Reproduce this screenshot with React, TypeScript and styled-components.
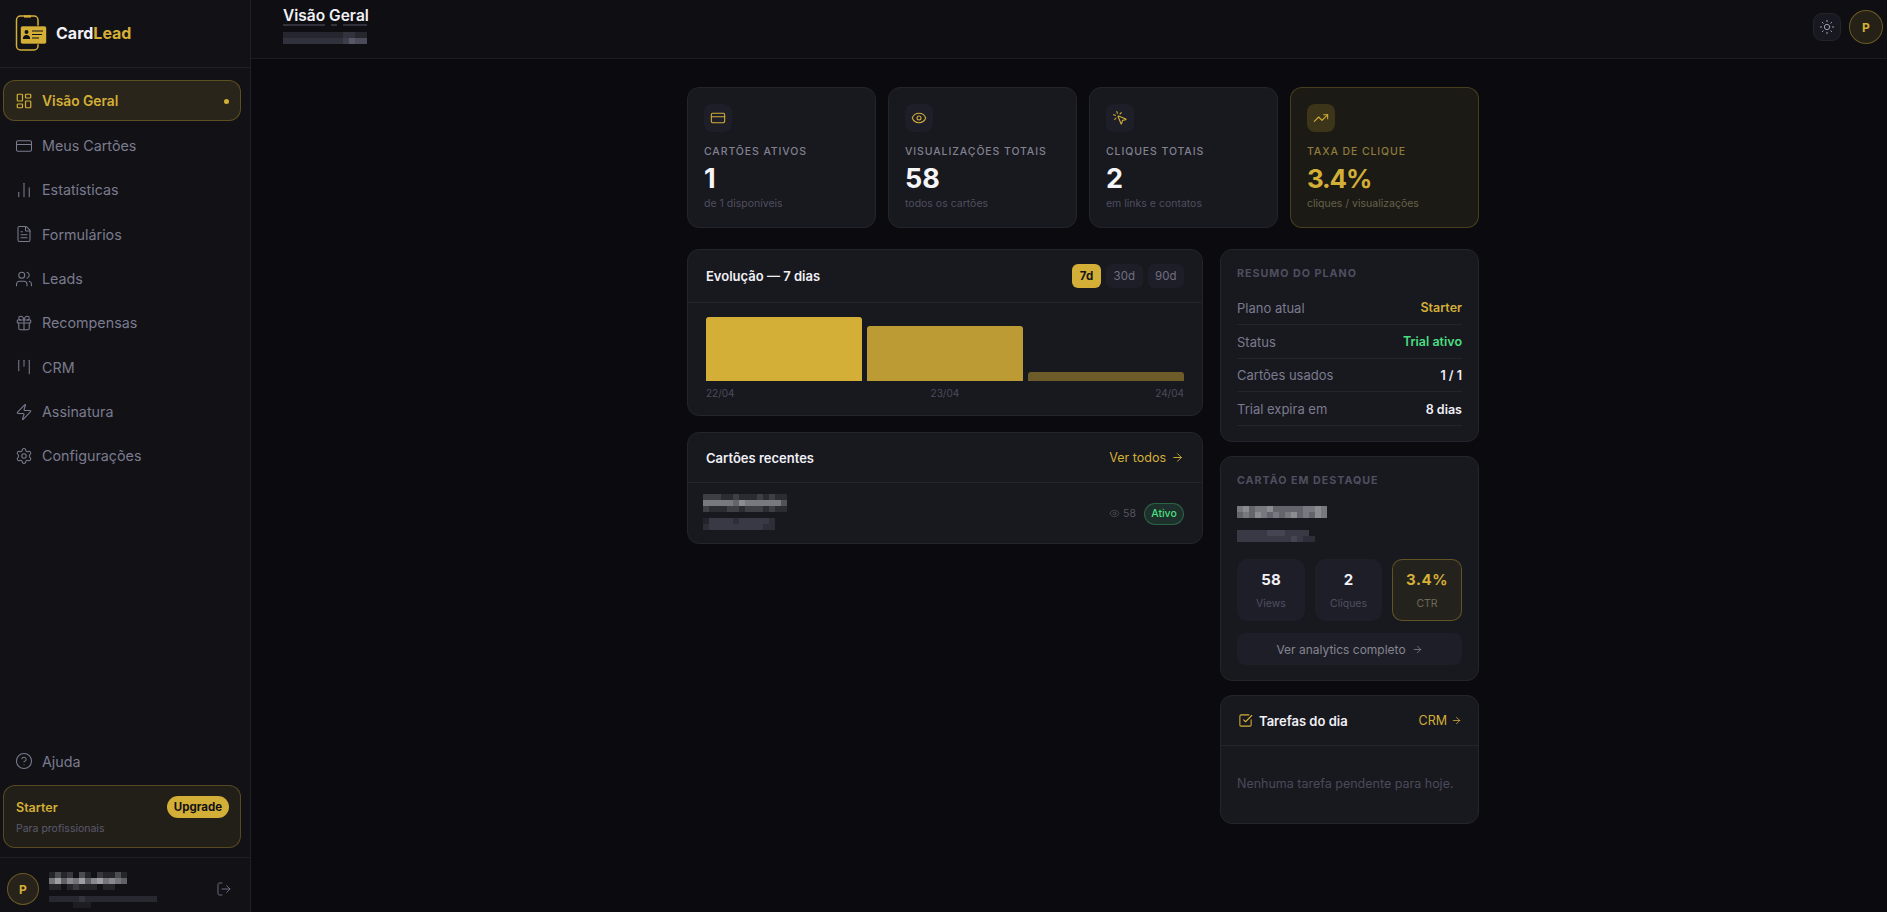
import React from 'react'
import styled, { createGlobalStyle } from 'styled-components'
import {
  ArrowRight,
  ChartNoAxesColumn,
  CircleHelp,
  CreditCard,
  Eye,
  FileText,
  Gift,
  Kanban,
  LayoutDashboard,
  LogOut,
  MousePointerClick,
  Settings,
  SquareCheckBig,
  Sun,
  TrendingUp,
  Users,
  Zap,
} from 'lucide-react'

const GOLD = '#d4af37'

const GlobalStyle = createGlobalStyle`
  * { box-sizing: border-box; }
  html, body { margin: 0; padding: 0; height: 100%; background: #0a0a0f; }
  body { font-family: Inter, "Liberation Sans", sans-serif; color: #f0f0f5; overflow: hidden; }
`

const Shell = styled.div`
  display: flex;
  width: 1887px;
  height: 912px;
  overflow: hidden;
`

const Sidebar = styled.aside`
  display: flex;
  flex-direction: column;
  flex: 0 0 251px;
  height: 912px;
  background: #111116;
  border-right: 1px solid #1f1f26;
`

const Brand = styled.div`
  display: flex;
  align-items: center;
  gap: 7px;
  height: 68px;
  padding: 0 0 0 14px;
  border-bottom: 1px solid #1f1f26;
`

const BrandName = styled.span`
  margin-top: -2px;
  font-size: 16px;
  font-weight: 700;
  color: #f0f0f5;
  span { color: ${GOLD}; }
`

const Nav = styled.nav`
  display: flex;
  flex-direction: column;
  flex: 1;
  gap: 3px;
  padding: 12px 9px 3.5px 3px;
`

const NavItem = styled.a<{ $active?: boolean }>`
  display: flex;
  align-items: center;
  flex: none;
  gap: 9px;
  height: 41.35px;
  padding: 1px 14px 0 11px;
  border: 1px solid ${(p) => (p.$active ? 'rgba(212,175,55,0.3)' : 'transparent')};
  border-radius: 12px;
  background: ${(p) => (p.$active ? 'rgba(212,175,55,0.13)' : 'transparent')};
  color: ${(p) => (p.$active ? GOLD : '#7b7b8e')};
  font-size: ${(p) => (p.$active ? 13.8 : 14.3)}px;
  font-weight: ${(p) => (p.$active ? 600 : 400)};
  svg { flex: none; }
`

const NavSpacer = styled.div`
  flex: 1;
`

const ActiveDot = styled.span`
  width: 5px;
  height: 5px;
  margin-left: auto;
  margin-right: -3px;
  border-radius: 50%;
  background: ${GOLD};
`

const PlanBox = styled.div`
  display: grid;
  grid-template-columns: 1fr auto;
  align-items: center;
  align-content: start;
  height: 63px;
  margin: 0 9px 9px 3px;
  padding: 10px 11px 0 12px;
  border: 1px solid rgba(212,175,55,0.3);
  border-radius: 12px;
  background: rgba(212,175,55,0.09);
`

const PlanName = styled.span`
  font-size: 12.5px;
  font-weight: 600;
  color: ${GOLD};
`

const UpgradeButton = styled.span`
  display: flex;
  align-items: center;
  height: 22px;
  padding: 0 7px;
  border-radius: 11px;
  background: ${GOLD};
  color: #111116;
  font-size: 11.5px;
  font-weight: 700;
`

const PlanHint = styled.span`
  grid-column: 1 / -1;
  margin-top: 4px;
  font-size: 10.5px;
  color: #5a5a6c;
`

const UserRow = styled.div`
  display: flex;
  align-items: center;
  gap: 10px;
  padding: 15px 18px 7px 7px;
  border-top: 1px solid #1f1f26;
  color: #6b6b7d;
`

const Avatar = styled.div<{ $size: number }>`
  display: flex;
  flex: none;
  align-items: center;
  justify-content: center;
  width: ${(p) => p.$size}px;
  height: ${(p) => p.$size}px;
  border: 1px solid rgba(212,175,55,0.4);
  border-radius: 50%;
  background: rgba(212,175,55,0.12);
  color: ${GOLD};
  font-size: 12px;
  font-weight: 700;
`

const UserText = styled.div`
  display: flex;
  flex: 1;
  flex-direction: column;
  gap: 6px;
  margin: -1px 0 -3px;
  svg { display: block; }
`

const Content = styled.div`
  display: flex;
  flex: 1;
  flex-direction: column;
  min-width: 0;
`

const TopBar = styled.header`
  display: flex;
  justify-content: space-between;
  height: 59px;
  padding: 7px 4px 0 32px;
  background: #0e0e13;
  border-bottom: 1px solid #1c1c23;
`

const PageTitle = styled.h1`
  margin: 0;
  font-size: 15.5px;
  line-height: 17px;
  font-weight: 600;
  color: #f0f0f5;
  white-space: nowrap;
`

const TitleBlock = styled.div`
  display: flex;
  flex-direction: column;
  width: 84px;
  gap: 6px;
  svg { display: block; }
`

const TopActions = styled.div`
  display: flex;
  align-items: flex-start;
  gap: 8px;
  padding-top: 3px;
`

const ThemeButton = styled.div`
  display: flex;
  align-items: center;
  justify-content: center;
  width: 28px;
  height: 28px;
  margin-top: 3px;
  border: 1px solid #24242d;
  border-radius: 9px;
  background: #181820;
  color: #9a9aae;
`

const Main = styled.main`
  display: flex;
  flex: 1;
  justify-content: center;
  padding: 28px 0 0 28px;
  background: #0a0a0f;
`

const Column = styled.div`
  display: flex;
  flex-direction: column;
  width: 792px;
`

const StatGrid = styled.section`
  display: grid;
  grid-template-columns: repeat(4, 1fr);
  gap: 12px;
`

const StatCard = styled.div<{ $gold?: boolean }>`
  height: 141px;
  padding: 16px;
  border: 1px solid ${(p) => (p.$gold ? 'rgba(212,175,55,0.25)' : '#24242c')};
  border-radius: 12px;
  background: ${(p) => (p.$gold ? '#1c1a14' : '#18181f')};
`

const StatIcon = styled.div<{ $gold?: boolean }>`
  display: flex;
  align-items: center;
  justify-content: center;
  width: 28px;
  height: 28px;
  margin-bottom: 13px;
  border-radius: 8px;
  background: ${(p) => (p.$gold ? 'rgba(212,175,55,0.18)' : '#1e1e29')};
  color: ${GOLD};
`

const StatLabel = styled.div<{ $gold?: boolean }>`
  font-size: 10.5px;
  line-height: 14px;
  font-weight: 500;
  letter-spacing: 0.9px;
  color: ${(p) => (p.$gold ? '#8f7c3f' : '#82828f')};
  white-space: nowrap;
`

const StatValue = styled.div<{ $gold?: boolean }>`
  margin-top: 4px;
  font-size: ${(p) => (p.$gold ? 26 : 27)}px;
  line-height: 32px;
  font-weight: 700;
  letter-spacing: ${(p) => (p.$gold ? -1.2 : 0)}px;
  color: ${(p) => (p.$gold ? GOLD : '#f5f5f8')};
`

const StatHint = styled.div<{ $gold?: boolean }>`
  margin-top: 2px;
  font-size: 10.5px;
  line-height: 14px;
  color: ${(p) => (p.$gold ? '#66614c' : '#4f4f5e')};
  white-space: nowrap;
`

const Columns = styled.div`
  display: grid;
  grid-template-columns: 516px 259px;
  justify-content: space-between;
  align-items: start;
  margin-top: 21px;
`

const Stack = styled.div<{ $gap: number }>`
  display: flex;
  flex-direction: column;
  gap: ${(p) => p.$gap}px;
`

const Card = styled.div`
  border: 1px solid #24242c;
  border-radius: 12px;
  background: #18181f;
`

const CardHead = styled.div<{ $height: number; $left?: number; $right?: number }>`
  display: flex;
  align-items: center;
  justify-content: space-between;
  height: ${(p) => p.$height}px;
  padding: 0 ${(p) => p.$right ?? 18}px 0 ${(p) => p.$left ?? 18}px;
  border-bottom: 1px solid #24242c;
`

const CardTitle = styled.h2`
  display: flex;
  align-items: center;
  gap: 6px;
  margin: 0;
  font-size: 13px;
  font-weight: 600;
  color: #f0f0f5;
  svg { color: ${GOLD}; }
`

const RangeTabs = styled.div`
  display: flex;
  gap: 5px;
`

const RangeTab = styled.span<{ $active?: boolean }>`
  display: flex;
  align-items: center;
  justify-content: center;
  width: ${(p) => (p.$active ? 29 : 36.5)}px;
  height: 24px;
  border-radius: 6px;
  background: ${(p) => (p.$active ? GOLD : '#1e1e28')};
  color: ${(p) => (p.$active ? '#16161a' : '#6f6f80')};
  font-size: 11.5px;
  font-weight: ${(p) => (p.$active ? 700 : 400)};
`

const ChartBody = styled.div`
  padding: 14px 18px 16px;
`

const Bars = styled.div`
  display: flex;
  align-items: flex-end;
  gap: 5px;
  height: 64px;
`

const Bar = styled.div<{ $height: number; $alpha: number }>`
  flex: 1;
  height: ${(p) => p.$height}px;
  border-radius: 3px 3px 0 0;
  background: ${GOLD};
  opacity: ${(p) => p.$alpha};
`

const BarLabels = styled.div`
  display: flex;
  justify-content: space-between;
  margin-top: 6px;
  font-size: 10px;
  line-height: 12px;
  color: #4c4c5a;
`

const GoldLink = styled.span<{ $gap: number }>`
  display: flex;
  align-items: center;
  gap: ${(p) => p.$gap}px;
  font-size: 12.5px;
  color: ${GOLD};
`

const RecentRow = styled.div`
  display: flex;
  align-items: center;
  justify-content: space-between;
  height: 60px;
  padding: 0 18px 2px 15px;
`

const MosaicStack = styled.div<{ $gap: number }>`
  display: flex;
  flex-direction: column;
  gap: ${(p) => p.$gap}px;
  svg { display: block; }
`

const RecentMeta = styled.div`
  display: flex;
  align-items: center;
  gap: 8px;
  margin-top: 3px;
`

const ViewCount = styled.span`
  display: flex;
  align-items: center;
  gap: 3px;
  font-size: 10.5px;
  color: #55555f;
`

const ActiveBadge = styled.span`
  display: flex;
  align-items: center;
  justify-content: center;
  width: 40px;
  height: 22px;
  border: 1px solid rgba(74,222,128,0.3);
  border-radius: 11px;
  background: rgba(74,222,128,0.12);
  color: #4ade80;
  font-size: 10.5px;
  font-weight: 500;
`

const Panel = styled(Card)`
  padding: 17px 16px 15px;
`

const PanelLabel = styled.div`
  font-size: 10.7px;
  line-height: 14px;
  font-weight: 700;
  letter-spacing: 1px;
  color: #4f4f5f;
`

const PlanRows = styled.div`
  display: flex;
  flex-direction: column;
  margin-top: 10px;
`

const PlanRow = styled.div`
  display: flex;
  align-items: center;
  justify-content: space-between;
  height: 33.8px;
  padding-top: 1px;
  border-bottom: 1px solid #24242c;
  font-size: 13px;
  color: #7b7b8e;
`

const PlanValue = styled.span<{ $color: string }>`
  font-size: 12.5px;
  font-weight: 600;
  color: ${(p) => p.$color};
`

const FeaturedMosaics = styled(MosaicStack)`
  margin-top: 18px;
`

const MiniGrid = styled.div`
  display: grid;
  grid-template-columns: 68fr 67fr 70fr;
  gap: 10px;
  margin-top: 17px;
`

const MiniStat = styled.div<{ $gold?: boolean }>`
  display: flex;
  flex-direction: column;
  align-items: center;
  justify-content: center;
  height: 62px;
  border: 1px solid ${(p) => (p.$gold ? 'rgba(212,175,55,0.35)' : 'transparent')};
  border-radius: 10px;
  background: ${(p) => (p.$gold ? '#24221c' : '#1e1e29')};
`

const MiniValue = styled.span<{ $gold?: boolean }>`
  font-size: 15px;
  line-height: 20px;
  font-weight: 700;
  letter-spacing: ${(p) => (p.$gold ? 0.5 : 0)}px;
  color: ${(p) => (p.$gold ? GOLD : '#f0f0f5')};
`

const MiniLabel = styled.span<{ $gold?: boolean }>`
  margin-top: 7px;
  font-size: 10.5px;
  line-height: 14px;
  color: ${(p) => (p.$gold ? '#6f6a55' : '#4f4f5f')};
`

const WideButton = styled.div`
  display: flex;
  align-items: center;
  justify-content: center;
  gap: 6px;
  height: 32px;
  margin-top: 12px;
  border-radius: 8px;
  background: #1e1e29;
  color: #85858f;
  font-size: 12px;
`

const EmptyText = styled.p`
  margin: 0;
  padding: 30px 0 31px 16px;
  font-size: 12.5px;
  line-height: 16px;
  color: #4a4a58;
  white-space: nowrap;
`

// the reference has these bits pixelated, digits are cell brightness 0-9
const Mosaic = ({ rows, w, h, color = '#d8d8e0' }: { rows: string[]; w: number; h: number; color?: string }) => {
  const width = rows[0].length * w
  const total = rows.length * h
  return (
    <svg width={width} height={total} viewBox={`0 0 ${width} ${total}`} shapeRendering="crispEdges" aria-hidden>
      {rows.map((row, r) =>
        row.split('').map((c, i) => (
          <rect key={`${r}-${i}`} x={i * w} y={r * h} width={w} height={h} fill={color} opacity={Number(c) / 10} />
        )),
      )}
    </svg>
  )
}

const Logo = () => (
  <svg width="35" height="37" viewBox="0 0 35 37" fill="none">
    <rect x="2.5" y="1" width="21.5" height="34" rx="4" stroke={GOLD} strokeWidth="1.5" />
    <path d="M10 1.5h7" stroke={GOLD} strokeWidth="2.2" />
    <rect x="6.5" y="11" width="26" height="18" rx="2" fill={GOLD} stroke="#111116" strokeWidth="0.6" />
    <circle cx="12.5" cy="17" r="2" fill="#111116" />
    <path d="M8.8 24c0-2.600 1.700-4 3.700-4s3.700 1.400 3.700 4z" fill="#111116" />
    <path d="M18 16h11M18 19.500h10M18 23h7" stroke="#111116" strokeWidth="1.100" />
  </svg>
)

const navItems = [
  { label: 'Meus Cartões', icon: CreditCard },
  { label: 'Estatísticas', icon: ChartNoAxesColumn },
  { label: 'Formulários', icon: FileText },
  { label: 'Leads', icon: Users },
  { label: 'Recompensas', icon: Gift },
  { label: 'CRM', icon: Kanban },
  { label: 'Assinatura', icon: Zap },
  { label: 'Configurações', icon: Settings },
]

const stats = [
  { label: 'CARTÕES ATIVOS', value: '1', hint: 'de 1 disponíveis', icon: CreditCard },
  { label: 'VISUALIZAÇÕES TOTAIS', value: '58', hint: 'todos os cartões', icon: Eye },
  { label: 'CLIQUES TOTAIS', value: '2', hint: 'em links e contatos', icon: MousePointerClick },
  { label: 'TAXA DE CLIQUE', value: '3.4%', hint: 'cliques / visualizações', icon: TrendingUp, gold: true },
]

const App = () => {
  return (
    <Shell>
      <GlobalStyle />
      <Sidebar>
        <Brand>
          <Logo />
          <BrandName>
            Card<span>Lead</span>
          </BrandName>
        </Brand>
        <Nav>
          <NavItem $active>
            <LayoutDashboard size={18} strokeWidth={1.6} />
            Visão Geral
            <ActiveDot />
          </NavItem>
          {navItems.map((item) => (
            <NavItem key={item.label}>
              <item.icon size={18} strokeWidth={1.4} />
              {item.label}
            </NavItem>
          ))}
          <NavSpacer />
          <NavItem>
            <CircleHelp size={18} strokeWidth={1.4} />
            Ajuda
          </NavItem>
        </Nav>
        <PlanBox>
          <PlanName>Starter</PlanName>
          <UpgradeButton>Upgrade</UpgradeButton>
          <PlanHint>Para profissionais</PlanHint>
        </PlanBox>
        <UserRow>
          <Avatar $size={32}>P</Avatar>
          <UserText>
            <Mosaic w={6} h={6} rows={['1312031021131', '5746574675654', '1101211101100']} />
            <Mosaic w={6} h={6} rows={['222223222222222222', '000011100000000000']} color="#8888a0" />
          </UserText>
          <LogOut size={16} strokeWidth={1.5} />
        </UserRow>
      </Sidebar>

      <Content>
        <TopBar>
          <TitleBlock>
            <div>
              <PageTitle>Visão Geral</PageTitle>
              <Mosaic w={6} h={2} rows={['33333330303333']} color="#8888a0" />
            </div>
            <Mosaic w={6} h={6} rows={['22222222223322', '33333333334655']} color="#8888a0" />
          </TitleBlock>
          <TopActions>
            <ThemeButton>
              <Sun size={16} strokeWidth={1.5} />
            </ThemeButton>
            <Avatar $size={34}>P</Avatar>
          </TopActions>
        </TopBar>
        <Main>
          <Column>
            <StatGrid>
              {stats.map((s) => (
                <StatCard key={s.label} $gold={s.gold}>
                  <StatIcon $gold={s.gold}>
                    <s.icon size={16} strokeWidth={1.6} />
                  </StatIcon>
                  <StatLabel $gold={s.gold}>{s.label}</StatLabel>
                  <StatValue $gold={s.gold}>{s.value}</StatValue>
                  <StatHint $gold={s.gold}>{s.hint}</StatHint>
                </StatCard>
              ))}
            </StatGrid>
            <Columns>
              <Stack $gap={16}>
                <Card>
                  <CardHead $height={53}>
                    <CardTitle>Evolução — 7 dias</CardTitle>
                    <RangeTabs>
                      <RangeTab $active>7d</RangeTab>
                      <RangeTab>30d</RangeTab>
                      <RangeTab>90d</RangeTab>
                    </RangeTabs>
                  </CardHead>
                  <ChartBody>
                    <Bars>
                      <Bar $height={64} $alpha={1} />
                      <Bar $height={55} $alpha={0.87} />
                      <Bar $height={9} $alpha={0.45} />
                    </Bars>
                    <BarLabels>
                      <span>22/04</span>
                      <span>23/04</span>
                      <span>24/04</span>
                    </BarLabels>
                  </ChartBody>
                </Card>
                <Card>
                  <CardHead $height={50}>
                    <CardTitle>Cartões recentes</CardTitle>
                    <GoldLink $gap={5}>
                      Ver todos <ArrowRight size={13} strokeWidth={1.7} />
                    </GoldLink>
                  </CardHead>
                  <RecentRow>
                    <MosaicStack $gap={6}>
                      <Mosaic w={6} h={6} rows={['22211211121211', '55555465555553', '21112212221211']} />
                      <Mosaic w={6} h={6} rows={['1333323333320', '2333333333220']} color="#8888a0" />
                    </MosaicStack>
                    <RecentMeta>
                      <ViewCount>
                        <Eye size={11} strokeWidth={1.5} /> 58
                      </ViewCount>
                      <ActiveBadge>Ativo</ActiveBadge>
                    </RecentMeta>
                  </RecentRow>
                </Card>
              </Stack>
              <Stack $gap={14}>
                <Panel>
                  <PanelLabel>RESUMO DO PLANO</PanelLabel>
                  <PlanRows>
                    <PlanRow>
                      Plano atual <PlanValue $color={GOLD}>Starter</PlanValue>
                    </PlanRow>
                    <PlanRow>
                      Status <PlanValue $color="#4ade80">Trial ativo</PlanValue>
                    </PlanRow>
                    <PlanRow>
                      Cartões usados <PlanValue $color="#f0f0f5">1 / 1</PlanValue>
                    </PlanRow>
                    <PlanRow>
                      Trial expira em <PlanValue $color="#f0f0f5">8 dias</PlanValue>
                    </PlanRow>
                  </PlanRows>
                </Panel>
                <Panel>
                  <PanelLabel>CARTÃO EM DESTAQUE</PanelLabel>
                  <FeaturedMosaics $gap={12}>
                    <Mosaic w={6} h={6} rows={['564556444445565', '454654545645465']} />
                    <Mosaic w={6} h={6} rows={['3333344433330', '3333333334322']} color="#8888a0" />
                  </FeaturedMosaics>
                  <MiniGrid>
                    <MiniStat>
                      <MiniValue>58</MiniValue>
                      <MiniLabel>Views</MiniLabel>
                    </MiniStat>
                    <MiniStat>
                      <MiniValue>2</MiniValue>
                      <MiniLabel>Cliques</MiniLabel>
                    </MiniStat>
                    <MiniStat $gold>
                      <MiniValue $gold>3.4%</MiniValue>
                      <MiniLabel $gold>CTR</MiniLabel>
                    </MiniStat>
                  </MiniGrid>
                  <WideButton>
                    Ver analytics completo <ArrowRight size={11} strokeWidth={1.7} />
                  </WideButton>
                </Panel>
                <Card>
                  <CardHead $height={50} $left={17} $right={16}>
                    <CardTitle>
                      <SquareCheckBig size={15} strokeWidth={1.7} /> Tarefas do dia
                    </CardTitle>
                    <GoldLink $gap={4}>
                      CRM <ArrowRight size={11} strokeWidth={1.7} />
                    </GoldLink>
                  </CardHead>
                  <EmptyText>Nenhuma tarefa pendente para hoje.</EmptyText>
                </Card>
              </Stack>
            </Columns>
          </Column>
        </Main>
      </Content>
    </Shell>
  )
}

export default App
